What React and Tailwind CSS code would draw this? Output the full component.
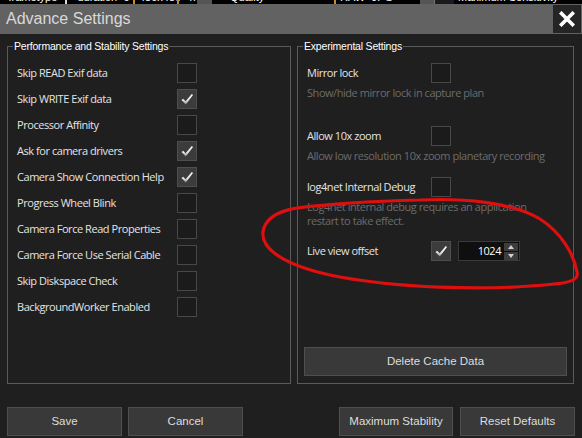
import React from 'react';

const leftOptions = [
  { label: 'Skip READ Exif data', checked: false },
  { label: 'Skip WRITE Exif data', checked: true },
  { label: 'Processor Affinity', checked: false },
  { label: 'Ask for camera drivers', checked: true },
  { label: 'Camera Show Connection Help', checked: true },
  { label: 'Progress Wheel Blink', checked: false },
  { label: 'Camera Force Read Properties', checked: false },
  { label: 'Camera Force Use Serial Cable', checked: false },
  { label: 'Skip Diskspace Check', checked: false },
  { label: 'BackgroundWorker Enabled', checked: false },
];

const labelFont = "font-['Open_Sans',sans-serif] text-[11px] tracking-[-0.45px]";
const uiFont = "font-['Liberation_Sans',Arial,sans-serif]";

const CheckMark = () => (
  <svg width="14" height="14" viewBox="0 0 14 14">
    <defs>
      <linearGradient id="tick" x1="0" y1="0" x2="0" y2="1">
        <stop offset="0" stopColor="#ffffff" />
        <stop offset="0.6" stopColor="#e4e4e4" />
        <stop offset="1" stopColor="#8a8a8a" />
      </linearGradient>
    </defs>
    <path d="M1.5 8 L3.2 6.8 L5.6 9.2 L11.8 2 L13 3 L5.8 12.6 Z" fill="url(#tick)" />
  </svg>
);

const CheckBox = ({ checked }) => (
  <div
    className={
      checked
        ? 'w-[20px] h-[20px] shrink-0 border border-[#4e4e4e] bg-[#3c3c3c] flex items-center justify-center'
        : 'w-[20px] h-[20px] shrink-0 border border-[#484848] bg-[#1b1b1b]'
    }
  >
    {checked && <CheckMark />}
  </div>
);

const Button = ({ children, className = '' }) => (
  <button
    className={`h-[29px] bg-[#393939] border border-[#4f4f4f] text-[#dedede] text-[11.5px] ${uiFont} ${className}`}
  >
    {children}
  </button>
);

// strip of the host window peeking above the dialog
const TopStrip = () => (
  <div className={`h-[4px] flex overflow-hidden bg-black text-white text-[11px] leading-[13px] ${uiFont}`}>
    <div className="w-[65px] -mt-[9px] pl-[2px]">&lt;frametype&gt;</div>
    <div className="w-[68px] -mt-[9px] pl-[4px] border-l-2 border-[#d9d9d9]">&lt;duration&gt;0</div>
    <div className="w-[44px] -mt-[9px] pl-[4px] border-l-2 border-[#c88a2a]">480x480</div>
    <div className="w-[20px] -mt-[9px] pl-[4px] border-l-2 border-[#c88a2a]">&lt;n</div>
    <div className="w-[15px] bg-[#555555]"></div>
    <div className="w-[122px] -mt-[9px] pl-[18px]">Quality</div>
    <div className="w-[86px] -mt-[9px] pl-[4px] border-l-2 border-[#c88a2a]">RAW+JPG</div>
    <div className="w-[14px] bg-[#555555]"></div>
    <div className="w-[20px] border-l border-[#777777] bg-[#1a1a1a]"></div>
    <div className="flex-1 -mt-[9px] pl-[4px]">Maximum Sensitivity</div>
  </div>
);

const TitleBar = () => (
  <div className="h-[30px] bg-[#626262] flex items-center justify-between pl-[6px] pr-[1px]">
    <span className={`text-[16px] text-[#d9d9d9] ${uiFont}`}>Advance Settings</span>
    <div className="w-[28px] h-[28px] bg-[#252525] flex items-center justify-center">
      <svg width="16" height="16" viewBox="0 0 16 16">
        <path d="M2.5 2.5 L13.5 13.5 M13.5 2.5 L2.5 13.5" stroke="#ffffff" strokeWidth="3.6" strokeLinecap="square" />
      </svg>
    </div>
  </div>
);

const Legend = ({ children }) => (
  <legend className={`ml-[5px] px-[1px] text-white text-[10.5px] leading-[13px] tracking-[-0.2px] ${uiFont}`}>
    {children}
  </legend>
);

const Spinner = ({ value }) => (
  <div className="ml-[7px] w-[62px] h-[20px] bg-[#0f0f0f] border border-[#3a3a3a] flex items-center">
    <span className={`flex-1 text-right pr-[3px] text-white ${labelFont}`}>{value}</span>
    <div className="w-[15px] h-full flex flex-col justify-center gap-[1px] pr-[1px]">
      <div className="h-[8px] bg-[#3d3d3d] flex items-center justify-center">
        <svg width="6" height="4" viewBox="0 0 6 4"><path d="M0 4 L3 0 L6 4 Z" fill="#d0d0d0" /></svg>
      </div>
      <div className="h-[8px] bg-[#3d3d3d] flex items-center justify-center">
        <svg width="6" height="4" viewBox="0 0 6 4"><path d="M0 0 L6 0 L3 4 Z" fill="#d0d0d0" /></svg>
      </div>
    </div>
  </div>
);

const OptionRow = ({ label, checked, width, children, className = '' }) => (
  <div className={`flex items-center ${className}`}>
    <span className={`text-[#e4e4e4] ${labelFont} ${width}`}>{label}</span>
    <CheckBox checked={checked} />
    {children}
  </div>
);

const Hint = ({ children }) => (
  <p className={`mt-[3px] leading-[14px] text-[#6c6c6c] ${labelFont}`}>{children}</p>
);

export default function App() {
  return (
    <div className="relative w-[582px] h-[438px] bg-[#1f1f1f] flex flex-col overflow-hidden">
      <TopStrip />
      <TitleBar />

      <div className="flex gap-[6px] px-[7px] pt-[6px]">
        <fieldset className="w-[284px] h-[344px] border border-[#5a5a5a]">
          <Legend>Performance and Stability Settings</Legend>
          <div className="pt-[7px] pl-[9px]">
            {leftOptions.map((o) => (
              <OptionRow key={o.label} label={o.label} checked={o.checked} width="w-[160px]" className="h-[26px]" />
            ))}
          </div>
        </fieldset>

        <fieldset className="w-[277px] h-[344px] border border-[#5a5a5a]">
          <Legend>Experimental Settings</Legend>
          <div className="pl-[9px]">
            <OptionRow label="Mirror lock" checked={false} width="w-[124px]" className="mt-[10px]" />
            <Hint>Show/hide mirror lock in capture plan</Hint>

            <OptionRow label="Allow 10x zoom" checked={false} width="w-[124px]" className="mt-[26px]" />
            <Hint>Allow low resolution 10x zoom planetary recording</Hint>

            <OptionRow label="log4net Internal Debug" checked={false} width="w-[124px]" className="mt-[14px]" />
            <Hint>
              Log4net internal debug requires an application
              <br />
              restart to take effect.
            </Hint>

            <OptionRow label="Live view offset" checked width="w-[124px]" className="mt-[13px]">
              <Spinner value="1024" />
            </OptionRow>
          </div>
          <div className="px-[6px] mt-[86px]">
            <Button className="w-full">Delete Cache Data</Button>
          </div>
        </fieldset>
      </div>

      <div className="mt-[23px] flex justify-between px-[7px]">
        <div className="flex gap-[6px]">
          <Button className="w-[115px] h-[28px]">Save</Button>
          <Button className="w-[115px] h-[28px]">Cancel</Button>
        </div>
        <div className="flex gap-[7px]">
          <Button className="w-[114px] h-[28px]">Maximum Stability</Button>
          <Button className="w-[115px] h-[28px]">Reset Defaults</Button>
        </div>
      </div>

      {/* red pen loop drawn over the dialog */}
      <svg className="absolute inset-0 pointer-events-none" width="582" height="438" viewBox="0 0 582 438">
        <path
          d="M330 205 C298 206 266 210 263 232 C261 252 292 268 340 277 C400 288 480 290 530 286 C560 284 580 283 577 272 C574 255 562 233 540 219 C512 202 462 198 420 200 C380 201 335 203 298 208"
          fill="none"
          stroke="#dd0f0f"
          strokeWidth="3.2"
          strokeLinecap="round"
        />
      </svg>
    </div>
  );
}
